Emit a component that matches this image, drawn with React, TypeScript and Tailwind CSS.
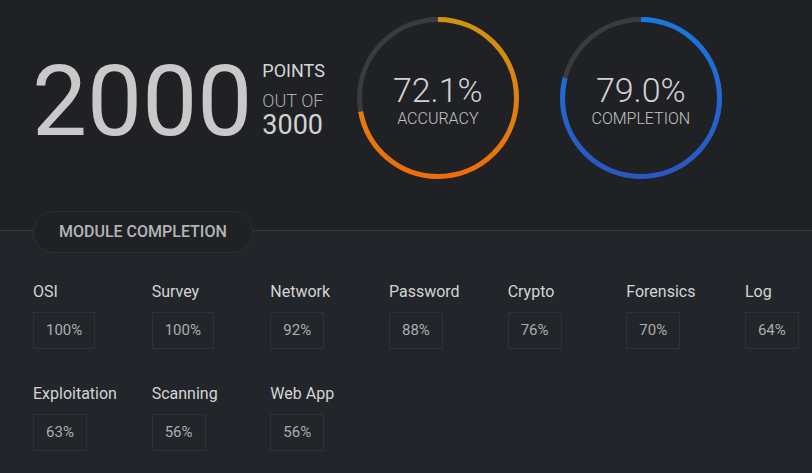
const MODULES = [
  { name: 'OSI', pct: 100 },
  { name: 'Survey', pct: 100 },
  { name: 'Network', pct: 92 },
  { name: 'Password', pct: 88 },
  { name: 'Crypto', pct: 76 },
  { name: 'Forensics', pct: 70 },
  { name: 'Log', pct: 64 },
  { name: 'Exploitation', pct: 63 },
  { name: 'Scanning', pct: 56 },
  { name: 'Web App', pct: 56 },
];

function Ring({
  id,
  value,
  label,
  from,
  to,
}: {
  id: string;
  value: number;
  label: string;
  from: string;
  to: string;
}) {
  const r = 78.5;
  const c = 2 * Math.PI * r;

  return (
    <div className="relative h-[162px] w-[162px] shrink-0">
      <svg width="162" height="162" viewBox="0 0 162 162">
        <defs>
          {/* circle is rotated -90, so local x=162 is the top of the ring */}
          <linearGradient id={id} x1="162" y1="0" x2="0" y2="0" gradientUnits="userSpaceOnUse">
            <stop offset="0" stopColor={from} />
            <stop offset="1" stopColor={to} />
          </linearGradient>
        </defs>
        <circle cx="81" cy="81" r={r} fill="none" stroke="#393b40" strokeWidth="5" />
        <circle
          cx="81"
          cy="81"
          r={r}
          fill="none"
          stroke={`url(#${id})`}
          strokeWidth="5"
          strokeDasharray={`${(c * value) / 100} ${c}`}
          transform="rotate(-90 81 81)"
        />
      </svg>
      <div className="absolute inset-0 flex flex-col items-center justify-center pt-[4px]">
        <span className="text-[34px] font-light leading-[34px] text-[#d2d2d2]">{value.toFixed(1)}%</span>
        <span className="mt-[3px] text-[16px] font-light leading-[18px] text-[#c4c4c4]">{label}</span>
      </div>
    </div>
  );
}

export default function App() {
  return (
    <div className="h-[473px] w-[812px] overflow-hidden bg-[#1f2125] font-['Roboto',sans-serif]">
      <div className="flex h-[230px] items-start pl-[32px]">
        <div className="mt-[53px] text-[98px] leading-[98px] text-[#c9c9c9]">2000</div>
        <div className="ml-[10px] mt-[62px] flex flex-col">
          <span className="text-[18px] leading-[18px] text-[#d6d6d6]">POINTS</span>
          <span className="mt-[12px] text-[18px] font-light leading-[18px] text-[#aeaeae]">OUT OF</span>
          <span className="mt-[2px] text-[27px] leading-[27px] text-[#d2d2d2]">3000</span>
        </div>
        <div className="ml-[32px] mt-[17px] flex gap-[41px]">
          <Ring id="acc" value={72.1} label="ACCURACY" from="#cf9410" to="#f06c0a" />
          <Ring id="cmp" value={79.0} label="COMPLETION" from="#1779df" to="#2b56c3" />
        </div>
      </div>

      <div className="h-[243px] border-t border-[#33363a] bg-[#222529]">
        <div className="-mt-[20px] ml-[33px] flex h-[42px] w-fit items-center rounded-full border border-[#2c2f33] bg-[#1f2125] px-[25px]">
          <span className="text-[16px] font-medium text-[#b3b5b7]">MODULE COMPLETION</span>
        </div>

        <div className="ml-[33px] mt-[27px] grid grid-cols-[repeat(7,118.67px)] gap-y-[33px]">
          {MODULES.map((m) => (
            <div key={m.name} className="flex flex-col items-start">
              <span className="text-[16px] leading-[24px] text-[#d4d4d4]">{m.name}</span>
              <div className="mt-[8px] flex h-[37px] items-center border border-[#2e3135] px-3 text-[15px] text-[#abadaf]">
                {m.pct}%
              </div>
            </div>
          ))}
        </div>
      </div>
    </div>
  );
}
